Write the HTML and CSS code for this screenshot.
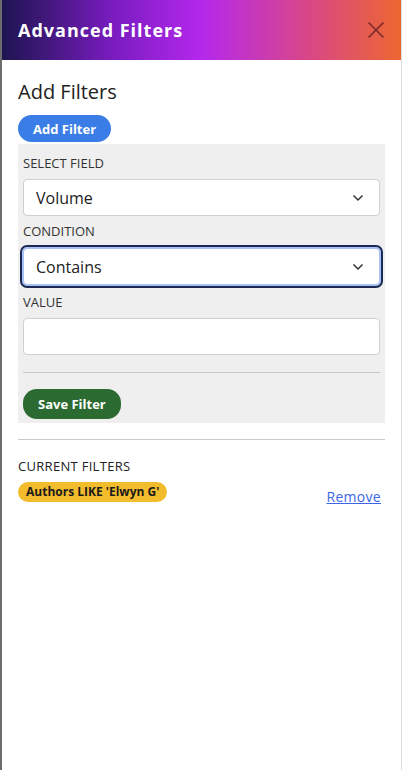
FILE: index.html
```html
<!DOCTYPE html>
<html lang="en">
<head>
<meta charset="utf-8">
<title>Advanced Filters</title>
<link rel="stylesheet" href="styles.css">
</head>
<body>
<aside class="drawer">
  <header class="drawer-head">
    <h1 class="drawer-title">Advanced Filters</h1>
    <button class="close-btn" aria-label="Close">
      <svg width="18" height="18" viewBox="0 0 18 18"><path d="M1.5 1.5L16.5 16.5M16.5 1.5L1.5 16.5" stroke="#7a2a2a" stroke-width="1.6" fill="none"/></svg>
    </button>
  </header>
  <div class="drawer-body">
    <h2 class="section-title">Add Filters</h2>
    <button class="pill pill-blue">Add Filter</button>
    <div class="filter-form">
      <label class="field-label">SELECT FIELD</label>
      <div class="select">
        <span>Volume</span>
        <svg class="chev" width="12" height="8" viewBox="0 0 12 8"><path d="M1.5 1.5L6 6L10.5 1.5" stroke="#333" stroke-width="1.5" fill="none"/></svg>
      </div>
      <label class="field-label">CONDITION</label>
      <div class="select focused">
        <span>Contains</span>
        <svg class="chev" width="12" height="8" viewBox="0 0 12 8"><path d="M1.5 1.5L6 6L10.5 1.5" stroke="#333" stroke-width="1.5" fill="none"/></svg>
      </div>
      <label class="field-label">VALUE</label>
      <div class="text-input"></div>
      <hr class="form-rule">
      <button class="pill pill-green">Save Filter</button>
    </div>
    <hr class="section-rule">
    <div class="current-label">CURRENT FILTERS</div>
    <div class="current-row">
      <span class="badge">Authors LIKE 'Elwyn G'</span>
      <a class="remove-link" href="#">Remove</a>
    </div>
  </div>
</aside>
</body>
</html>
```
FILE: styles.css
```css
* { box-sizing: border-box; }
html, body { margin: 0; height: 100%; }
body {
  background: #fff;
  font-family: "Open Sans", "Noto Sans", sans-serif;
  color: #222;
}
.drawer {
  width: 402px;
  height: 770px;
  border-left: 2px solid #6c6c6c;
  border-right: 1px solid #d9dde3;
  background: #fff;
}
.drawer-head {
  height: 60px;
  padding: 0 16px;
  display: flex;
  align-items: center;
  justify-content: space-between;
  background: linear-gradient(90deg, #1d1550 0%, #7a1cc0 28%, #b428ec 50%, #d8468a 76%, #ec6731 100%);
}
.drawer-title {
  margin: 0;
  color: #fff;
  font-size: 18px;
  font-weight: 700;
  letter-spacing: 1px;
}
.close-btn {
  border: 0;
  background: none;
  padding: 0;
  width: 18px;
  height: 18px;
  display: flex;
  cursor: pointer;
}
.drawer-body {
  padding: 17px 16px 0;
}
.section-title {
  margin: 0 0 8px;
  font-size: 20px;
  font-weight: 400;
  color: #222;
  line-height: 30px;
}
.pill {
  border: 0;
  color: #fff;
  font-family: inherit;
  font-weight: 700;
  font-size: 13px;
  border-radius: 14px;
  padding: 0 15px;
  cursor: pointer;
}
.pill-blue {
  background: #3b7de6;
  height: 27px;
  display: block;
}
.pill-green {
  background: #2b6a30;
  height: 30px;
}
.filter-form {
  margin-top: 2px;
  background: #efefef;
  padding: 11px 5px 4px;
  display: flex;
  flex-direction: column;
  align-items: flex-start;
}
.field-label {
  font-size: 13px;
  color: #333;
  line-height: 16px;
  margin-bottom: 8px;
}
.select, .text-input {
  width: 100%;
  height: 37px;
  background: #fff;
  border: 1px solid #cfcfd4;
  border-radius: 4px;
}
.select {
  display: flex;
  align-items: center;
  justify-content: space-between;
  padding: 0 15px 0 12px;
  font-size: 16px;
  color: #222;
  margin-bottom: 7px;
}
.select.focused {
  border-color: #a8c0f4;
  outline: 2px solid #1b2a55;
  outline-offset: 1px;
  box-shadow: 0 0 0 1px #a8c0f4;
  margin-top: 1px;
  margin-bottom: 9px;
}
.text-input { margin-bottom: 17px; }
.form-rule {
  width: 100%;
  margin: 0 0 16px;
  border: 0;
  border-top: 1px solid #c8c8c8;
}
.section-rule {
  margin: 16px 0 18px;
  border: 0;
  border-top: 1px solid #c9c9c9;
}
.current-label {
  font-size: 13px;
  color: #222;
  line-height: 16px;
  letter-spacing: 0.3px;
  margin-bottom: 8px;
}
.current-row {
  display: flex;
  justify-content: space-between;
  align-items: flex-start;
  padding-right: 4px;
}
.badge {
  background: #f3bc2c;
  color: #1a1a1a;
  font-weight: 700;
  font-size: 12px;
  height: 20px;
  line-height: 20px;
  padding: 0 8px;
  border-radius: 10px;
}
.remove-link {
  margin-top: 5px;
  color: #3a66e6;
  font-size: 14px;
  letter-spacing: 0.3px;
  text-decoration: underline;
}
```
